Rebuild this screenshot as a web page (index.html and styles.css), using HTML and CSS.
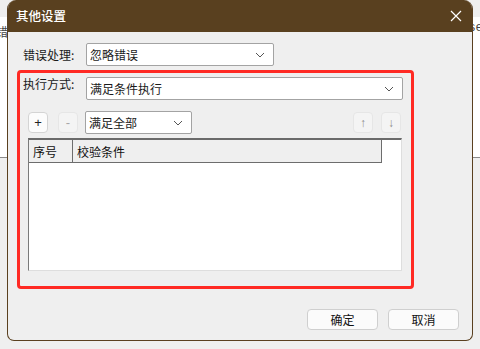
FILE: index.html
```html
<!DOCTYPE html>
<html lang="zh">
<head>
    <meta charset="UTF-8">
    <title>其他设置</title>
    <link rel="stylesheet" href="styles.css">
</head>
<body>
    <div class="page-strip">
        <span class="edge-left">设置错</span>
        <span class="edge-right">ser</span>
    </div>

    <div class="dialog">
        <div class="titlebar">
            <span class="title">其他设置</span>
            <svg class="close" width="12" height="12" viewBox="0 0 12 12">
                <path d="M1 1 L11 11 M11 1 L1 11" stroke="#fff" stroke-width="1.2" fill="none"/>
            </svg>
        </div>
        <div class="dialog-body">
            <div class="field-row">
                <label class="field-label">错误处理:</label>
                <div class="select select-short">
                    <span>忽略错误</span>
                    <svg class="chevron" width="10" height="6" viewBox="0 0 10 6"><path d="M1 1 L5 5 L9 1" stroke="#555" fill="none"/></svg>
                </div>
            </div>

            <div class="highlight">
                <div class="field-row top">
                    <label class="field-label">执行方式:</label>
                    <div class="select select-long">
                        <span>满足条件执行</span>
                        <svg class="chevron" width="10" height="6" viewBox="0 0 10 6"><path d="M1 1 L5 5 L9 1" stroke="#555" fill="none"/></svg>
                    </div>
                </div>

                <div class="toolbar">
                    <button class="tool-btn">+</button>
                    <button class="tool-btn disabled">-</button>
                    <div class="select select-mode">
                        <span>满足全部</span>
                        <svg class="chevron" width="10" height="6" viewBox="0 0 10 6"><path d="M1 1 L5 5 L9 1" stroke="#555" fill="none"/></svg>
                    </div>
                    <div class="spacer"></div>
                    <button class="tool-btn disabled arrow">↑</button>
                    <button class="tool-btn disabled arrow">↓</button>
                </div>

                <div class="grid">
                    <div class="grid-head">
                        <div class="col col-no">序号</div>
                        <div class="col col-rule">校验条件</div>
                    </div>
                </div>
            </div>

            <div class="actions">
                <button class="btn">确定</button>
                <button class="btn">取消</button>
            </div>
        </div>
    </div>
</body>
</html>
```

FILE: styles.css
```css
body {
    margin: 0;
    width: 480px;
    height: 349px;
    overflow: hidden;
    background-color: #efefef;
    font-family: "Noto Sans CJK SC", "Noto Sans", sans-serif;
    font-size: 12px;
    color: #1a1a1a;
}
.page-strip {
    margin-top: 17px;
    height: 140px;
    background-color: #fff;
    border-bottom: 1px solid #8a8a8a;
    display: flex;
    justify-content: space-between;
    font-family: "Liberation Mono", "Noto Sans CJK SC", monospace;
    font-size: 12px;
    color: #444;
}
.edge-left {
    margin-left: -28px;
    margin-top: 6px;
}
.edge-right {
    margin-right: -10px;
    margin-top: 4px;
}
.dialog {
    position: absolute;
    left: 7px;
    top: 0;
    width: 466px;
    height: 341px;
    box-sizing: border-box;
    background-color: #efefef;
    border: 1px solid #5a4020;
    border-top: none;
    border-radius: 9px 9px 7px 7px;
    overflow: hidden;
}
.titlebar {
    height: 31px;
    background-color: #59401f;
    display: flex;
    align-items: center;
    justify-content: space-between;
    padding: 0 10px 1px 9px;
    margin: 0 -1px;
}
.title {
    color: #fff;
    font-size: 12.5px;
    font-weight: 500;
}
.close {
    margin-right: 1px;
}
.dialog-body {
    padding: 11px 0 0 9px;
}
.field-row {
    display: flex;
    align-items: center;
    margin-left: 6px;
}
.field-row.top {
    align-items: flex-start;
    margin-left: 3px;
}
.field-label {
    width: 63px;
}
.field-row.top .field-label {
    margin-top: -2px;
}
.select {
    box-sizing: border-box;
    height: 23px;
    background-color: #fff;
    border: 1px solid #a3a3a3;
    border-radius: 2px;
    display: flex;
    align-items: center;
    justify-content: space-between;
    padding: 0 8px 0 3px;
}
.select-short {
    width: 188px;
}
.select-long {
    width: 317px;
}
.select-mode {
    width: 107px;
}
.highlight {
    box-sizing: border-box;
    width: 397px;
    height: 219px;
    margin-top: 4px;
    border: 3px solid #ff2a24;
    border-radius: 4px;
    padding-top: 4px;
}
.toolbar {
    display: flex;
    align-items: center;
    margin: 11px 10px 0 8px;
    height: 23px;
}
.tool-btn {
    box-sizing: border-box;
    width: 20px;
    height: 21px;
    padding: 0;
    margin-right: 10px;
    background-color: #fcfcfc;
    border: 1px solid #d4d4d4;
    border-radius: 4px;
    font-family: "Liberation Sans", sans-serif;
    font-size: 13px;
    color: #222;
}
.tool-btn.disabled {
    background-color: #f4f4f4;
    border-color: #e6e6e6;
    color: #a8a8a8;
}
.tool-btn + .select {
    margin-left: -3px;
}
.tool-btn.arrow {
    margin-right: 0;
    margin-left: 8px;
    color: #8c8c8c;
    font-size: 12px;
}
.spacer {
    flex: 1;
}
.grid {
    box-sizing: border-box;
    width: 374px;
    height: 133px;
    margin: 4px 0 0 8px;
    background-color: #fff;
    border-top: 2px solid #6a6a6a;
    border-left: 1px solid #7a7a7a;
    border-right: 1px solid #dedede;
    border-bottom: 1px solid #dedede;
}
.grid-head {
    display: flex;
    height: 23px;
}
.col {
    box-sizing: border-box;
    background-color: #efefef;
    border-right: 1px solid #6d6d6d;
    border-bottom: 1px solid #6d6d6d;
    display: flex;
    align-items: center;
    padding-left: 4px;
    color: #111;
}
.col-no {
    width: 44px;
}
.col-rule {
    width: 309px;
}
.actions {
    display: flex;
    justify-content: flex-end;
    gap: 10px;
    margin: 20px 13px 0 0;
}
.btn {
    box-sizing: border-box;
    width: 71px;
    height: 21px;
    padding: 0;
    background-color: #fbfbfb;
    border: 1px solid #cfcfcf;
    border-radius: 4px;
    font-family: "Noto Sans CJK SC", sans-serif;
    font-size: 12px;
    color: #111;
}
```
